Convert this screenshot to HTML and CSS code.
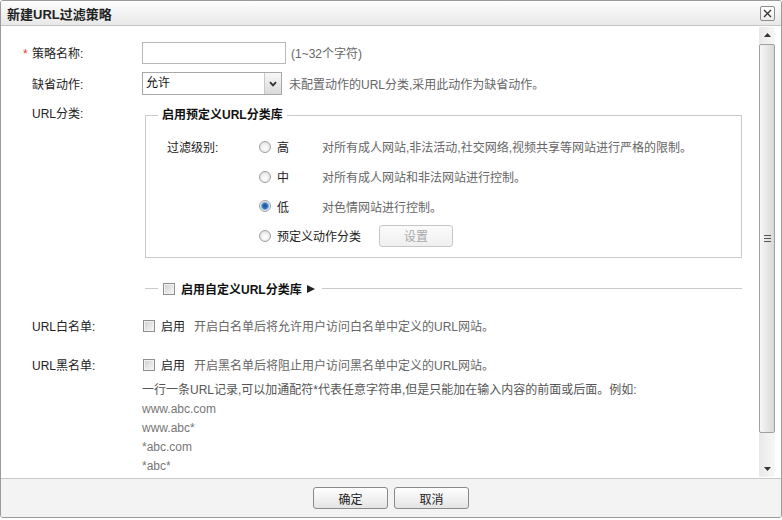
FILE: index.html
```html
<!DOCTYPE html>
<html lang="zh-CN">
<head>
<meta charset="utf-8">
<title>新建URL过滤策略</title>
<link rel="stylesheet" href="styles.css">
</head>
<body>
<div class="dialog">
  <div class="titlebar">
    <span class="title">新建URL过滤策略</span>
    <span class="close"><svg width="9" height="9" viewBox="0 0 9 9"><path d="M1 1L8 8M8 1L1 8" stroke="#333" stroke-width="1.3" fill="none"/></svg></span>
  </div>
  <div class="main">
    <div class="content">
      <div class="row">
        <div class="label"><span class="req">*</span>策略名称:</div>
        <div class="field"><input class="text" type="text"><span class="hint">(1~32个字符)</span></div>
      </div>
      <div class="row">
        <div class="label">缺省动作:</div>
        <div class="field">
          <div class="select"><span class="sel-val">允许</span><span class="sel-btn"><svg width="8" height="6" viewBox="0 0 8 6"><path d="M1 1.2L4 4.4L7 1.2" stroke="#333" stroke-width="1.8" fill="none"/></svg></span></div>
          <span class="hint hint-sel">未配置动作的URL分类,采用此动作为缺省动作。</span>
        </div>
      </div>
      <div class="row top">
        <div class="label">URL分类:</div>
        <div class="stack">
          <fieldset class="group">
            <legend>启用预定义URL分类库</legend>
            <div class="levels">
              <div class="lv-label">过滤级别:</div>
              <div class="opt"><span class="radio"></span>高</div>
              <div class="desc">对所有成人网站,非法活动,社交网络,视频共享等网站进行严格的限制。</div>
              <div class="opt"><span class="radio"></span>中</div>
              <div class="desc">对所有成人网站和非法网站进行控制。</div>
              <div class="opt"><span class="radio on"></span>低</div>
              <div class="desc">对色情网站进行控制。</div>
              <div class="opt wide"><span class="radio"></span>预定义动作分类<button class="btn small disabled" type="button">设置</button></div>
            </div>
          </fieldset>
          <div class="divider">
            <span class="line short"></span>
            <span class="check"></span>
            <span class="divider-text">启用自定义URL分类库<span class="tri"></span></span>
            <span class="line"></span>
          </div>
        </div>
      </div>
      <div class="row cb">
        <div class="label">URL白名单:</div>
        <div class="field"><span class="check"></span><span class="cb-text">启用</span><span class="hint cb-hint">开启白名单后将允许用户访问白名单中定义的URL网站。</span></div>
      </div>
      <div class="row cb cb2">
        <div class="label">URL黑名单:</div>
        <div class="field"><span class="check"></span><span class="cb-text">启用</span><span class="hint cb-hint">开启黑名单后将阻止用户访问黑名单中定义的URL网站。</span></div>
      </div>
      <div class="notes">
        <div class="note">一行一条URL记录,可以加通配符*代表任意字符串,但是只能加在输入内容的前面或后面。例如:</div>
        <div class="ex">www.abc.com</div>
        <div class="ex">www.abc*</div>
        <div class="ex">*abc.com</div>
        <div class="ex">*abc*</div>
      </div>
    </div>
    <div class="scrollbar">
      <div class="sb-btn"><svg width="7" height="4" viewBox="0 0 7 4"><path d="M0 4L3.5 0L7 4Z" fill="#333"/></svg></div>
      <div class="sb-thumb"><svg width="7" height="7" viewBox="0 0 7 7"><path d="M0 0.5H7M0 3.5H7M0 6.5H7" stroke="#555" stroke-width="1"/></svg></div>
      <div class="sb-track"></div>
      <div class="sb-btn"><svg width="7" height="4" viewBox="0 0 7 4"><path d="M0 0L3.5 4L7 0Z" fill="#333"/></svg></div>
    </div>
  </div>
  <div class="footer">
    <button class="btn" type="button">确定</button>
    <button class="btn" type="button">取消</button>
  </div>
</div>
</body>
</html>
```
FILE: styles.css
```css
* { box-sizing: border-box; }
html, body { margin: 0; padding: 0; background: #fff; }
body {
  font-family: "Liberation Sans", "Noto Sans CJK SC", sans-serif;
  font-size: 12px;
  color: #222;
}

.dialog {
  width: 782px;
  height: 518px;
  border: 1px solid #9a9a9a;
  border-radius: 3px;
  display: flex;
  flex-direction: column;
  overflow: hidden;
  background: #fff;
}

.titlebar {
  flex: none;
  height: 25px;
  border-bottom: 1px solid #c4c4c4;
  background: linear-gradient(#fdfdfd, #e8e8e8);
  display: flex;
  align-items: center;
  justify-content: space-between;
  padding: 0 6px;
}
.title { font-weight: bold; font-size: 13px; color: #222; }
.close {
  width: 15px;
  height: 15px;
  border: 1px solid #8c8c8c;
  border-radius: 2px;
  background: linear-gradient(#fff, #ececec);
  display: flex;
  align-items: center;
  justify-content: center;
}

.main { flex: 1; display: flex; min-height: 0; }
.content { flex: 1; padding-top: 11px; overflow: hidden; }

.row { display: flex; align-items: center; min-height: 31px; }
.label { flex: none; width: 141px; padding-left: 31px; color: #222; }
.req { display: inline-block; width: 9px; margin-left: -9px; color: #e03c3c; }
.field { display: flex; align-items: center; }

.text {
  width: 144px;
  height: 22px;
  margin: 0;
  padding: 0 3px;
  border: 1px solid #b8b8b8;
  font: inherit;
}
.hint { color: #666; margin-left: 5px; }
.hint-sel { margin-left: 7px; }

.select {
  width: 140px;
  height: 23px;
  border: 1px solid #a8a8a8;
  display: flex;
}
.sel-val { flex: 1; padding-left: 3px; line-height: 21px; color: #111; }
.sel-btn {
  width: 17px;
  border-left: 1px solid #c8c8c8;
  background: linear-gradient(#f8f8f8, #dadada);
  display: flex;
  align-items: center;
  justify-content: center;
}

.row.top { align-items: flex-start; }
.row.top .label { padding-top: 5px; line-height: 20px; }
.stack { display: flex; flex-direction: column; }

.group {
  margin: 7px 0 0 3px;
  width: 597px;
  min-inline-size: 0;
  border: 1px solid #cacaca;
  padding: 0 0 6px 12px;
}
.group legend {
  padding: 0 4px;
  font-weight: bold;
  line-height: 18px;
  color: #111;
}
.levels {
  display: grid;
  grid-template-columns: 92px 63px 1fr;
  grid-auto-rows: 29.7px;
  align-items: center;
  padding: 8px 0 0 9px;
}
.lv-label { grid-column: 1; }
.opt { grid-column: 2; display: flex; align-items: center; gap: 6px; }
.opt.wide { grid-column: 2 / 4; }
.desc { grid-column: 3; color: #666; }

.radio {
  flex: none;
  width: 12px;
  height: 12px;
  border-radius: 50%;
  border: 1px solid #a0a0a0;
  background: radial-gradient(circle at 50% 60%, #fff 0, #f2f2f2 40%, #d6d6d6 100%);
}
.radio.on {
  background: radial-gradient(circle, #174f96 0, #2f6fbf 2.5px, #7fb0e0 3.6px, #e6e6e6 4.2px, #fafafa 100%);
}

.btn {
  width: 75px;
  height: 22px;
  padding: 0;
  border: 1px solid #8a8a8a;
  border-radius: 3px;
  background: linear-gradient(#fff, #e4e4e4);
  font: inherit;
  color: #222;
}
.btn.small { width: 74px; margin-left: 12px; }
.btn.disabled {
  border-color: #c6c6c6;
  color: #a8a8a8;
  background: linear-gradient(#fbfbfb, #efefef);
}

.divider {
  margin: 21px 0 0 3px;
  width: 597px;
  height: 20px;
  display: flex;
  align-items: center;
}
.line { flex: 1; height: 1px; background: #cacaca; }
.line.short { flex: none; width: 13px; }
.divider .check { margin: 0 6px 0 5px; }
.divider-text {
  font-weight: bold;
  color: #111;
  margin-right: 7px;
  display: flex;
  align-items: center;
}
.tri {
  display: inline-block;
  margin-left: 5px;
  width: 0;
  height: 0;
  border-left: 8px solid #222;
  border-top: 4.5px solid transparent;
  border-bottom: 4.5px solid transparent;
}

.check {
  flex: none;
  display: inline-block;
  width: 12px;
  height: 12px;
  border: 1px solid #8e8e8e;
  background: linear-gradient(135deg, #cfcfcf, #f8f8f8);
  box-shadow: inset 0 0 0 1px #f2f2f2;
}
.row.cb { min-height: 20px; margin-top: 17px; }
.row.cb2 { margin-top: 19px; }
.row.cb .check { margin-left: 1px; }
.cb-text { margin-left: 6px; color: #222; }
.cb-hint { margin-left: 9px; }

.notes { padding-left: 141px; margin-top: 6px; line-height: 19px; }
.note { color: #555; }
.ex { color: #777; }

.scrollbar {
  flex: none;
  width: 16px;
  margin: 1px 6px 1px 0;
  display: flex;
  flex-direction: column;
  background: linear-gradient(to right, #e9e9e9, #f7f7f7);
}
.sb-btn {
  flex: none;
  height: 16px;
  display: flex;
  align-items: center;
  justify-content: center;
}
.sb-thumb {
  flex: none;
  height: 389px;
  margin-top: 1px;
  border: 1px solid #a0a0a0;
  border-radius: 2px;
  background: linear-gradient(to right, #f7f7f7, #d8d8d8);
  display: flex;
  align-items: center;
  justify-content: center;
}
.sb-track { flex: 1; }

.footer {
  flex: none;
  height: 39px;
  border-top: 1px solid #c8c8c8;
  background: #f3f3f3;
  display: flex;
  justify-content: center;
  gap: 6px;
  padding-top: 8px;
}
```
